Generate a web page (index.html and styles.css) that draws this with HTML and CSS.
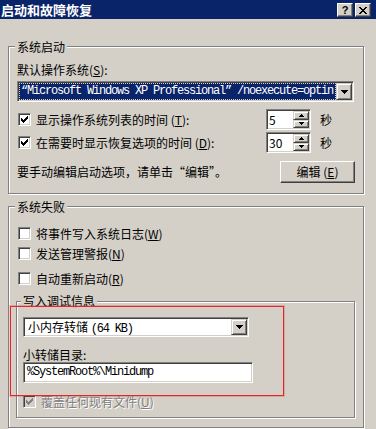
FILE: index.html
```html
<!DOCTYPE html>
<html lang="zh-CN">
<head>
    <meta charset="UTF-8">
    <meta name="viewport" content="width=device-width, initial-scale=1.0">
    <title>启动和故障恢复</title>
    <link rel="stylesheet" href="styles.css">
</head>
<body>
    <div class="titlebar">
        <span class="caption">启动和故障恢复</span>
        <div class="caption-btns">
            <span class="cap-btn help">?</span>
            <span class="cap-btn close">
                <svg width="8" height="7" viewBox="0 0 8 7"><path d="M0 0h2v1h-2zM6 0h2v1h-2zM1 1h2v1h-2zM5 1h2v1h-2zM2 2h4v1h-4zM3 3h2v1h-2zM2 4h4v1h-4zM1 5h2v1h-2zM5 5h2v1h-2zM0 6h2v1h-2zM6 6h2v1h-2z"/></svg>
            </span>
        </div>
    </div>

    <div class="content">
        <!-- 系统启动 -->
        <div class="group outer startup">
            <div class="group-title"><span>系统启动</span></div>
            <div class="field-label">默认操作系统(<u>S</u>):</div>
            <div class="combo wide">
                <div class="combo-text selected mono">“Microsoft Windows XP Professional” /noexecute=optin</div>
                <span class="combo-btn">
                    <svg width="7" height="4" viewBox="0 0 7 4"><path d="M0 0h7v1h-7zM1 1h5v1h-5zM2 2h3v1h-3zM3 3h1v1h-1z"/></svg>
                </span>
            </div>

            <div class="spin-row">
                <span class="check">
                    <svg width="9" height="9" viewBox="0 0 9 9"><path d="M7 1h1v1h-1zM6 2h2v1h-2zM1 3h1v1h-1zM5 3h3v1h-3zM1 4h2v1h-2zM4 4h3v1h-3zM1 5h5v1h-5zM2 6h3v1h-3zM3 7h1v1h-1z"/></svg>
                </span>
                <span class="check-label">显示操作系统列表的时间 (<u>T</u>):</span>
                <div class="spinner">
                    <span class="spin-value">5</span>
                    <div class="spin-btns">
                        <span class="spin-btn"><svg width="5" height="3" viewBox="0 0 5 3"><path d="M2 0h1v1h-1zM1 1h3v1h-3zM0 2h5v1h-5z"/></svg></span>
                        <span class="spin-btn"><svg width="5" height="3" viewBox="0 0 5 3"><path d="M0 0h5v1h-5zM1 1h3v1h-3zM2 2h1v1h-1z"/></svg></span>
                    </div>
                </div>
                <span class="unit">秒</span>
            </div>

            <div class="spin-row second">
                <span class="check">
                    <svg width="9" height="9" viewBox="0 0 9 9"><path d="M7 1h1v1h-1zM6 2h2v1h-2zM1 3h1v1h-1zM5 3h3v1h-3zM1 4h2v1h-2zM4 4h3v1h-3zM1 5h5v1h-5zM2 6h3v1h-3zM3 7h1v1h-1z"/></svg>
                </span>
                <span class="check-label">在需要时显示恢复选项的时间 (<u>D</u>):</span>
                <div class="spinner">
                    <span class="spin-value">30</span>
                    <div class="spin-btns">
                        <span class="spin-btn"><svg width="5" height="3" viewBox="0 0 5 3"><path d="M2 0h1v1h-1zM1 1h3v1h-3zM0 2h5v1h-5z"/></svg></span>
                        <span class="spin-btn"><svg width="5" height="3" viewBox="0 0 5 3"><path d="M0 0h5v1h-5zM1 1h3v1h-3zM2 2h1v1h-1z"/></svg></span>
                    </div>
                </div>
                <span class="unit">秒</span>
            </div>

            <div class="edit-row">
                <span class="hint">要手动编辑启动选项，请单击“编辑”。</span>
                <span class="button">编辑 (<u>E</u>)</span>
            </div>
        </div>

        <!-- 系统失败 -->
        <div class="group outer failure">
            <div class="group-title"><span>系统失败</span></div>
            <div class="check-row first">
                <span class="check"></span>
                <span class="check-label">将事件写入系统日志(<u>W</u>)</span>
            </div>
            <div class="check-row second">
                <span class="check"></span>
                <span class="check-label">发送管理警报(<u>N</u>)</span>
            </div>
            <div class="check-row third">
                <span class="check"></span>
                <span class="check-label">自动重新启动(<u>R</u>)</span>
            </div>

            <div class="group debug">
                <div class="group-title debug-title"><span>写入调试信息</span></div>
                <div class="combo dump">
                    <div class="combo-text">小内存转储 <span class="mono">(64 KB)</span></div>
                    <span class="combo-btn">
                        <svg width="7" height="4" viewBox="0 0 7 4"><path d="M0 0h7v1h-7zM1 1h5v1h-5zM2 2h3v1h-3zM3 3h1v1h-1z"/></svg>
                    </span>
                </div>
                <div class="field-label dir-label">小转储目录:</div>
                <div class="textbox mono">%SystemRoot%\Minidump</div>
                <div class="check-row disabled">
                    <span class="check">
                        <svg width="9" height="9" viewBox="0 0 9 9"><path d="M7 1h1v1h-1zM6 2h2v1h-2zM1 3h1v1h-1zM5 3h3v1h-3zM1 4h2v1h-2zM4 4h3v1h-3zM1 5h5v1h-5zM2 6h3v1h-3zM3 7h1v1h-1z"/></svg>
                    </span>
                    <span class="check-label">覆盖任何现有文件(<u>U</u>)</span>
                </div>
            </div>

            <div class="highlight-box"></div>
        </div>
    </div>
</body>
</html>
```

FILE: styles.css
```css
body {
    margin: 0;
    width: 376px;
    height: 429px;
    overflow: hidden;
    background: #d4d0c8;
    color: #000;
    font-family: "Noto Sans CJK SC", sans-serif;
    font-size: 12px;
    line-height: 14px;
}
.mono {
    font-family: "Liberation Mono", monospace;
    font-size: 12px;
    letter-spacing: -1.2px;
}

/* title bar */
.titlebar {
    height: 19px;
    background: #0a246a;
    color: #fff;
    display: flex;
    align-items: flex-start;
}
.caption {
    flex: 1;
    font-weight: bold;
    font-size: 13px;
    padding-left: 1px;
    line-height: 19px;
}
.caption-btns {
    display: flex;
    gap: 2px;
    margin: 3px 5px 0 0;
}
.cap-btn {
    width: 16px;
    height: 14px;
    box-sizing: border-box;
    background: #d4d0c8;
    color: #000;
    border: 1px solid;
    border-color: #fff #404040 #404040 #fff;
    box-shadow: inset -1px -1px #808080;
    display: flex;
    align-items: center;
    justify-content: center;
}
.help {
    font-family: "Liberation Sans", sans-serif;
    font-weight: bold;
    font-size: 11px;
    line-height: 12px;
}

/* group boxes */
.content {
    padding-left: 8px;
}
.group {
    box-sizing: border-box;
    border: 1px solid #808080;
    box-shadow: inset 1px 1px #fff, 1px 1px #fff;
    padding: 0 8px;
}
.outer {
    width: 356px;
}
.startup {
    margin-top: 27px;
    height: 148px;
}
.failure {
    margin-top: 12px;
    height: 222px;
    position: relative;
}
.group-title {
    height: 14px;
    margin-top: -7px;
}
.group-title span {
    background: #d4d0c8;
    padding: 0 2px;
    margin-left: -2px;
}
.debug {
    margin: 16px 0 0 -1px;
    padding: 0 6px;
    height: 117px;
}
.debug-title {
    margin-top: -8px;
}

.field-label {
    margin-top: 9px;
}

/* sunken controls */
.combo, .spinner, .textbox, .check {
    box-sizing: border-box;
    background: #fff;
    border: 1px solid;
    border-color: #808080 #fff #fff #808080;
    box-shadow: inset 1px 1px #404040, inset -1px -1px #d4d0c8;
}
.combo {
    display: flex;
    padding: 1px;
}
.combo.wide {
    margin-top: 4px;
    width: 337px;
    height: 21px;
}
.combo.dump {
    margin-top: 9px;
    width: 226px;
    height: 20px;
}
.combo-text {
    flex: 1;
    overflow: hidden;
    white-space: nowrap;
    padding-left: 2px;
    line-height: 17px;
}
.dump .combo-text {
    line-height: 16px;
    padding-left: 3px;
}
.combo-text.selected {
    background: #0a246a;
    color: #fff;
    outline: 1px dotted #d4d0c8;
    outline-offset: -1px;
}
.combo-btn, .spin-btn, .button {
    box-sizing: border-box;
    background: #d4d0c8;
    border: 1px solid;
    border-color: #d4d0c8 #404040 #404040 #d4d0c8;
    box-shadow: inset 1px 1px #fff, inset -1px -1px #808080;
    display: flex;
    align-items: center;
    justify-content: center;
}
.combo-btn {
    width: 16px;
}

/* rows with check boxes */
.spin-row {
    display: flex;
    align-items: center;
    height: 21px;
    margin-top: 7px;
}
.spin-row.second {
    margin-top: 2px;
}
.check {
    width: 13px;
    height: 13px;
    flex: none;
    margin-left: 1px;
    padding: 1px;
    display: flex;
}
.check-label {
    margin-left: 5px;
}
.spin-row .check-label {
    flex: 1;
}
.spinner {
    width: 45px;
    height: 21px;
    display: flex;
    padding: 1px;
}
.spin-value {
    flex: 1;
    padding-left: 1px;
    line-height: 17px;
}
.spin-btns {
    width: 16px;
    display: flex;
    flex-direction: column;
}
.spin-btn {
    flex: 1;
}
.unit {
    width: 44px;
    box-sizing: border-box;
    padding-left: 9px;
}

.edit-row {
    display: flex;
    align-items: center;
    height: 22px;
    margin-top: 8px;
}
.hint {
    flex: 1;
}
.button {
    width: 75px;
    height: 22px;
    border-color: #fff #404040 #404040 #fff;
    box-shadow: inset -1px -1px #808080;
}

.check-row {
    display: flex;
    align-items: center;
    height: 13px;
}
.check-row.first {
    margin-top: 13px;
}
.check-row.second {
    margin-top: 7px;
}
.check-row.third {
    margin-top: 12px;
}
.check-row.disabled {
    margin-top: 12px;
}
.check-row.disabled .check {
    background: #d4d0c8;
    margin-left: 0;
}
.check-row.disabled svg {
    fill: #808080;
}
.check-row.disabled .check-label {
    color: #808080;
    text-shadow: 1px 1px #fff;
}

.dir-label {
    margin-top: 11px;
}
.textbox {
    width: 230px;
    height: 21px;
    padding: 1px 3px;
    line-height: 17px;
    white-space: nowrap;
}

.highlight-box {
    position: absolute;
    left: 1px;
    top: 99px;
    width: 274px;
    height: 90px;
    box-sizing: border-box;
    border: 1px solid #e3262c;
    box-shadow: 0 0 0 1px rgba(227, 38, 44, 0.25);
}
```
